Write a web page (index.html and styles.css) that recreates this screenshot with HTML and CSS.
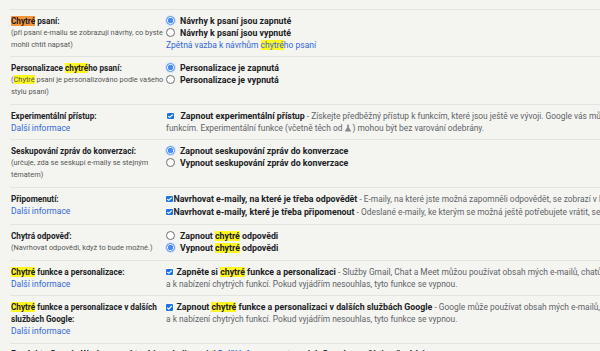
FILE: index.html
```html
<!DOCTYPE html>
<html>
  <head>
    <title>Nastavení</title>
    <meta name="viewport" content="width=device-width, initial-scale=1">
    <link rel="stylesheet" href="styles.css">
  </head>
  <body>
    <div class="settings">
      <div class="row prev">
        <div class="label"></div>
        <div class="opts">
          <div class="opt"><span class="radio"></span><b>Vypnout zobrazování typů zpráv</b></div>
        </div>
      </div>

      <div class="row">
        <div class="label">
          <div class="title"><mark class="cur">Chytré</mark> psaní:</div>
          <div class="sub">(při psaní e-mailu se zobrazují návrhy, co byste mohli chtít napsat)</div>
        </div>
        <div class="opts">
          <div class="opt"><span class="radio on"></span><b>Návrhy k psaní jsou zapnuté</b></div>
          <div class="opt"><span class="radio"></span><b>Návrhy k psaní jsou vypnuté</b></div>
          <a class="link" href="#">Zpětná vazba k návrhům <mark>chytré</mark>ho psaní</a>
        </div>
      </div>

      <div class="row">
        <div class="label">
          <div class="title">Personalizace <mark>chytré</mark>ho psaní:</div>
          <div class="sub">(<mark>Chytré</mark> psaní je personalizováno podle vašeho stylu psaní)</div>
        </div>
        <div class="opts">
          <div class="opt"><span class="radio on"></span><b>Personalizace je zapnutá</b></div>
          <div class="opt"><span class="radio"></span><b>Personalizace je vypnutá</b></div>
        </div>
      </div>

      <div class="row">
        <div class="label">
          <div class="title">Experimentální přístup:</div>
          <a class="link" href="#">Další informace</a>
        </div>
        <div class="opts">
          <div class="opt"><span class="check wide"></span><b>Zapnout experimentální přístup</b><span class="desc"> - Získejte předběžný přístup k funkcím, které jsou ještě ve vývoji. Google vás může požádat o zpětnou vazbu k těmto</span></div>
          <div class="line desc">funkcím. Experimentální funkce (včetně těch od <svg class="flask" viewBox="0 0 10 10"><path d="M3.5 1h3v.8h-.5v2.4l2.6 4.2c.3.5 0 .9-.5.9H1.9c-.5 0-.8-.4-.5-.9L4 4.2V1.8h-.5z" fill="#8a8a8a"/></svg>) mohou být bez varování odebrány.</div>
        </div>
      </div>

      <div class="row">
        <div class="label">
          <div class="title">Seskupování zpráv do konverzací:</div>
          <div class="sub">(určuje, zda se seskupí e-maily se stejným tématem)</div>
        </div>
        <div class="opts">
          <div class="opt"><span class="radio on"></span><b>Zapnout seskupování zpráv do konverzace</b></div>
          <div class="opt"><span class="radio"></span><b>Vypnout seskupování zpráv do konverzace</b></div>
        </div>
      </div>

      <div class="row">
        <div class="label">
          <div class="title">Připomenutí:</div>
          <a class="link" href="#">Další informace</a>
        </div>
        <div class="opts tall">
          <div class="opt"><span class="check tight"></span><b>Navrhovat e-maily, na které je třeba odpovědět</b><span class="desc"> - E-maily, na které jste možná zapomněli odpovědět, se zobrazí v horní části doručené pošty</span></div>
          <div class="opt"><span class="check tight"></span><b>Navrhovat e-maily, které je třeba připomenout</b><span class="desc"> - Odeslané e-maily, ke kterým se možná ještě potřebujete vrátit, se zobrazí v horní části</span></div>
        </div>
      </div>

      <div class="row">
        <div class="label">
          <div class="title">Chytrá odpověď:</div>
          <div class="sub">(Navrhovat odpovědi, když to bude možné.)</div>
        </div>
        <div class="opts">
          <div class="opt"><span class="radio"></span><b>Zapnout <mark>chytré</mark> odpovědi</b></div>
          <div class="opt"><span class="radio on"></span><b>Vypnout <mark>chytré</mark> odpovědi</b></div>
        </div>
      </div>

      <div class="row">
        <div class="label">
          <div class="title"><mark>Chytré</mark> funkce a personalizace:</div>
          <a class="link" href="#">Další informace</a>
        </div>
        <div class="opts">
          <div class="opt"><span class="check"></span><b>Zapněte si <mark>chytré</mark> funkce a personalizaci</b><span class="desc"> - Služby Gmail, Chat a Meet můžou používat obsah mých e-mailů, chatů a videí k personalizaci</span></div>
          <div class="line desc">a k nabízení chytrých funkcí. Pokud vyjádřím nesouhlas, tyto funkce se vypnou.</div>
        </div>
      </div>

      <div class="row">
        <div class="label">
          <div class="title"><mark>Chytré</mark> funkce a personalizace v dalších službách Google:</div>
          <a class="link" href="#">Další informace</a>
        </div>
        <div class="opts">
          <div class="opt"><span class="check"></span><b>Zapnout <mark>chytré</mark> funkce a personalizaci v dalších službách Google</b><span class="desc"> - Google může používat obsah mých e-mailů, chatů a videí</span></div>
          <div class="line desc">a k nabízení chytrých funkcí. Pokud vyjádřím nesouhlas, tyto funkce se vypnou.</div>
        </div>
      </div>

      <div class="row last">
        <div class="note">Produkty Google Workspace, které jsou k dispozici <a class="link" href="#">Další informace</a> o tom, jak Google používá vaše údaje</div>
      </div>
    </div>
  </body>
</html>
```
FILE: styles.css
```css
html, body {
  margin: 0;
  overflow: hidden;
}
body {
  background: #f4f5f1;
  font-family: Roboto, "Liberation Sans", Arial, sans-serif;
  color: #222;
  font-size: 8px;
  line-height: 12px;
}
.settings {
  margin-left: 10px;
  margin-top: -16px;
  width: 1000px;
}
.row {
  display: flex;
  border-bottom: 1px solid #e3e4e0;
  padding: 5px 0 5.5px;
}
.row.prev {
  padding-bottom: 7.5px;
}
.row.last {
  border-bottom: none;
  padding-top: 4.5px;
}
.label {
  width: 154px;
  flex: none;
  padding-left: 1px;
  box-sizing: border-box;
}
.title {
  font-size: 8.2px;
  font-weight: 700;
  color: #202124;
}
.sub {
  font-size: 7.4px;
  color: #555;
}
.opts {
  white-space: nowrap;
  font-size: 8.8px;
}
.opts.tall .opt {
  line-height: 13px;
}
.opt b {
  font-weight: 700;
  color: #202124;
}
.line {
  padding-left: 2px;
}
.desc {
  color: #5f6368;
  font-weight: 400;
  font-size: 8.4px;
}
.note {
  padding-left: 1px;
  font-size: 9px;
  font-weight: 700;
  color: #202124;
}
.link {
  display: block;
  color: #3367d6;
  text-decoration: none;
  font-size: 8.5px;
}
.opts .link {
  padding-left: 2px;
}
.note .link {
  display: inline;
}
mark {
  background: #fff720;
  color: inherit;
}
mark.cur {
  background: #f7953c;
}
.radio {
  display: inline-block;
  vertical-align: -1px;
  width: 7px;
  height: 7px;
  border: 1px solid #6e6e6e;
  border-radius: 50%;
  margin: 0 5px 0 2px;
  background: #fff;
}
.radio.on {
  border-color: #4a8af4;
  background: radial-gradient(circle, #4a8af4 0 2.5px, #fff 3px);
  box-shadow: 0 0 0 1px #d6e4fb;
}
.check {
  display: inline-block;
  vertical-align: -0.5px;
  width: 6.5px;
  height: 6.5px;
  border-radius: 1px;
  margin: 0 4px 0 2px;
  background: #1a73e8 url("data:image/svg+xml,%3Csvg xmlns='http://www.w3.org/2000/svg' viewBox='0 0 8 8'%3E%3Cpath d='M1.4 4.1l1.7 1.7 3.5-3.6' fill='none' stroke='white' stroke-width='1.4'/%3E%3C/svg%3E") center/6.5px no-repeat;
  box-shadow: 0 0 0 0.5px #fff;
}
.check.wide {
  margin-left: 3px;
  margin-right: 7px;
}
.check.tight {
  margin-right: 1px;
}
.flask {
  width: 8px;
  height: 8px;
  vertical-align: -1px;
}
.prev .opts {
  margin-left: -20px;
}
```
